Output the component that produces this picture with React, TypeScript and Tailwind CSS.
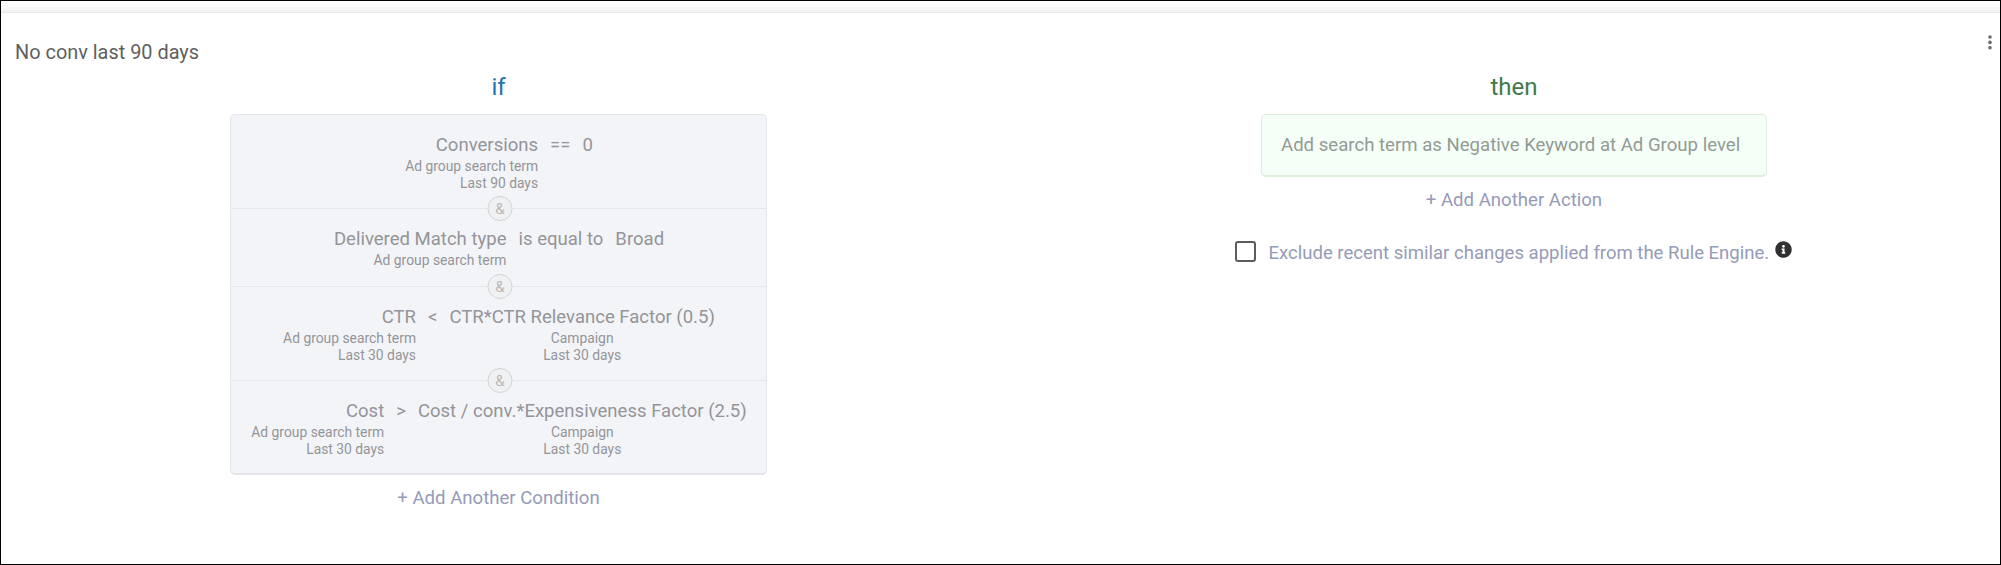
import type { ReactNode } from 'react';

interface Operand {
    label: string;
    details: string[];
}

interface Condition {
    left: Operand;
    operator: string;
    right: Operand;
    height: string;
}

const conditions: Condition[] = [
    {
        left: { label: 'Conversions', details: ['Ad group search term', 'Last 90 days'] },
        operator: '==',
        right: { label: '0', details: [] },
        height: 'h-[94px]',
    },
    {
        left: { label: 'Delivered Match type', details: ['Ad group search term'] },
        operator: 'is equal to',
        right: { label: 'Broad', details: [] },
        height: 'h-[78px]',
    },
    {
        left: { label: 'CTR', details: ['Ad group search term', 'Last 30 days'] },
        operator: '<',
        right: { label: 'CTR*CTR Relevance Factor (0.5)', details: ['Campaign', 'Last 30 days'] },
        height: 'h-[94px]',
    },
    {
        left: { label: 'Cost', details: ['Ad group search term', 'Last 30 days'] },
        operator: '>',
        right: { label: 'Cost / conv.*Expensiveness Factor (2.5)', details: ['Campaign', 'Last 30 days'] },
        height: 'h-[92px]',
    },
];

function OperandBlock({ operand, align }: { operand: Operand; align: string }) {
    return (
        <div className={`flex flex-col ${align}`}>
            <span className="leading-[25px]">{operand.label}</span>
            {operand.details.map((detail) => (
                <span key={detail} className="text-[13.85px] leading-[16.5px]">{detail}</span>
            ))}
        </div>
    );
}

function ConditionRow({ condition, last }: { condition: Condition; last: boolean }) {
    return (
        <div
            className={`relative flex justify-center gap-3 pt-[18px] pl-px ${condition.height} ${
                last ? '' : 'border-b border-[#e4e6ea]'
            }`}
        >
            <OperandBlock operand={condition.left} align="items-end" />
            <span className="leading-[25px]">{condition.operator}</span>
            <OperandBlock operand={condition.right} align="items-center" />
            {!last && (
                <span className="absolute -bottom-[13px] left-[269px] z-10 flex size-[25px] -translate-x-1/2 items-center justify-center rounded-full border border-[#d2d3d5] bg-[#f0f1f2] pt-0.5 text-[15px] text-[#b9babc]">
                    &amp;
                </span>
            )}
        </div>
    );
}

function AddLink({ children }: { children: ReactNode }) {
    return <button className="mt-[11px] text-[18.6px] leading-6 text-[#959bb7]">{children}</button>;
}

export default function App() {
    return (
        <div className="flex h-[565px] w-[2001px] flex-col border border-black bg-white font-['Roboto',sans-serif] text-[18.55px] whitespace-nowrap">
            <div className="h-3 border-b border-[#e9e9e9] bg-linear-to-b from-white to-[#f3f3f3]" />
            <header className="flex h-[59px] items-start justify-between">
                <h1 className="mt-7 ml-3.5 text-[19.9px] leading-6 text-[#5f5f5f]">No conv last 90 days</h1>
                <button className="mt-[19px] mr-[7px]" aria-label="More options">
                    <svg width="6" height="20" viewBox="0 0 6 20" fill="#6b6b6b">
                        <circle cx="3" cy="5" r="1.8" />
                        <circle cx="3" cy="10.4" r="1.8" />
                        <circle cx="3" cy="15.8" r="1.8" />
                    </svg>
                </button>
            </header>
            <main className="flex">
                <section className="flex w-[995px] flex-col items-center">
                    <h2 className="text-[24px] leading-[30px] text-[#2473b2]">if</h2>
                    <div className="mt-3 h-[361px] w-[537px] rounded-[5px] border border-b-2 border-[#e3e5ea] bg-[#f3f4f8] text-[#949599]">
                        {conditions.map((condition, i) => (
                            <ConditionRow
                                key={condition.left.label}
                                condition={condition}
                                last={i === conditions.length - 1}
                            />
                        ))}
                    </div>
                    <AddLink>+ Add Another Condition</AddLink>
                </section>
                <section className="ml-8 flex w-[972px] flex-col items-center">
                    <h2 className="text-[24px] leading-[30px] text-[#3f7a49]">then</h2>
                    <div className="mt-3 flex h-[63px] w-[506px] items-center rounded-[5px] border border-b-2 border-[#dfeedd] bg-[#f5fff8] pt-0.5 pl-[19px] text-[18.6px] text-[#929b94]">
                        Add search term as Negative Keyword at Ad Group level
                    </div>
                    <AddLink>+ Add Another Action</AddLink>
                    <div className="mt-[28px] flex w-[559px] items-start">
                        <span className="mt-px size-[21px] rounded-[3px] border-2 border-[#5c5c5c]" />
                        <span className="ml-[13px] mt-px leading-6 text-[#959bb7]">
                            Exclude recent similar changes applied from the Rule Engine.
                        </span>
                        <svg className="ml-1.5 mt-px" width="17" height="17" viewBox="0 0 512 512" fill="#303030">
                            <path d="M256 8C119 8 8 119 8 256s111 248 248 248 248-111 248-248S393 8 256 8zm0 110c23.200 0 42 18.800 42 42s-18.800 42-42 42-42-18.800-42-42 18.800-42 42-42zm56 254c0 6.600-5.400 12-12 12h-88c-6.600 0-12-5.400-12-12v-24c0-6.600 5.400-12 12-12h12v-64h-12c-6.600 0-12-5.400-12-12v-24c0-6.600 5.400-12 12-12h64c6.600 0 12 5.400 12 12v100h12c6.600 0 12 5.400 12 12v24z" />
                        </svg>
                    </div>
                </section>
            </main>
        </div>
    );
}
